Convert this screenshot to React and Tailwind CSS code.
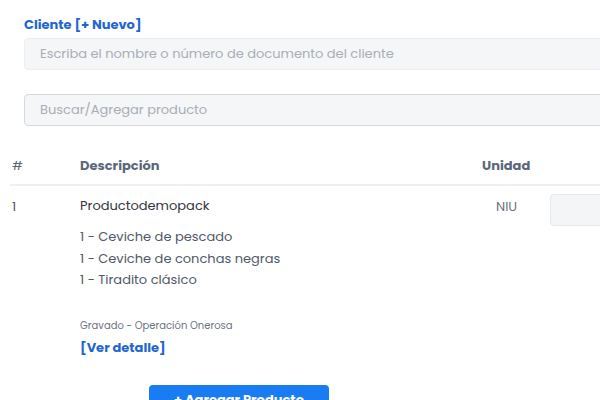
import React from 'react'

const font = { fontFamily: '"Poppins", "Open Sans", "DejaVu Sans", sans-serif' }

const items = ['1 - Ceviche de pescado', '1 - Ceviche de conchas negras', '1 - Tiradito clásico']

const App = () => {
  return (
    <div className="w-[600px] h-[400px] overflow-hidden bg-white" style={font}>
      <div className="pt-[16px] pl-[24px]">
        <div className="text-[13px] font-bold text-[#1f66d1] leading-[18px]">Cliente [+ Nuevo]</div>
        <div className="mt-[4px] h-[32px] w-[600px] rounded-l-[4px] border border-[#eceef1] bg-[#f5f6f8] flex items-center pl-[15px] text-[13px] text-[#a9adb4]">
          Escriba el nombre o número de documento del cliente
        </div>
        <div className="mt-[24px] h-[32px] w-[600px] rounded-l-[4px] border border-[#d6d8dc] bg-[#f5f6f8] flex items-center pl-[15px] text-[13px] text-[#a9adb4]">
          Buscar/Agregar producto
        </div>
      </div>

      <div className="ml-[10px] mt-[27px]">
        <div className="flex h-[33px] items-center pb-[6px] border-b-2 border-[#eef0f3] text-[13px] text-[#5b6679]">
          <div className="w-[70px] shrink-0 pl-[2px]">#</div>
          <div className="w-[402px] shrink-0 font-bold">Descripción</div>
          <div className="font-bold">Unidad</div>
        </div>
        <div className="flex pt-[8px]">
          <div className="w-[70px] shrink-0 pl-[2px] pt-[3px] text-[13px] text-[#4b5563]">1</div>
          <div className="w-[402px] shrink-0">
            <div className="pt-[3px] text-[13px] leading-[18px] text-[#2f3640]">Productodemopack</div>
            <div className="mt-[11px] text-[13px] leading-[21.5px] text-[#505968]">
              {items.map((t) => (
                <div key={t}>{t}</div>
              ))}
            </div>
            <div className="mt-[28px] text-[10px] text-[#6b7280] leading-[14px]">Gravado - Operación Onerosa</div>
            <div className="mt-[6px] text-[13px] font-bold text-[#1f66d1] leading-[18px]">[Ver detalle]</div>
          </div>
          <div className="w-[68px] shrink-0 pl-[14px] pt-[3px] text-[13px] text-[#6b7280]">NIU</div>
          <div className="h-[32px] w-[60px] shrink-0 rounded-l-[4px] border border-[#e6e8eb] bg-[#f4f5f7]"></div>
        </div>
        <div className="mt-[28px] ml-[139px] w-[180px] h-[36px] rounded-[4px] bg-[#1a7cf2] flex justify-center pt-[5px] text-[13px] font-bold text-white">
          + Agregar Producto
        </div>
      </div>
    </div>
  )
}

export default App
